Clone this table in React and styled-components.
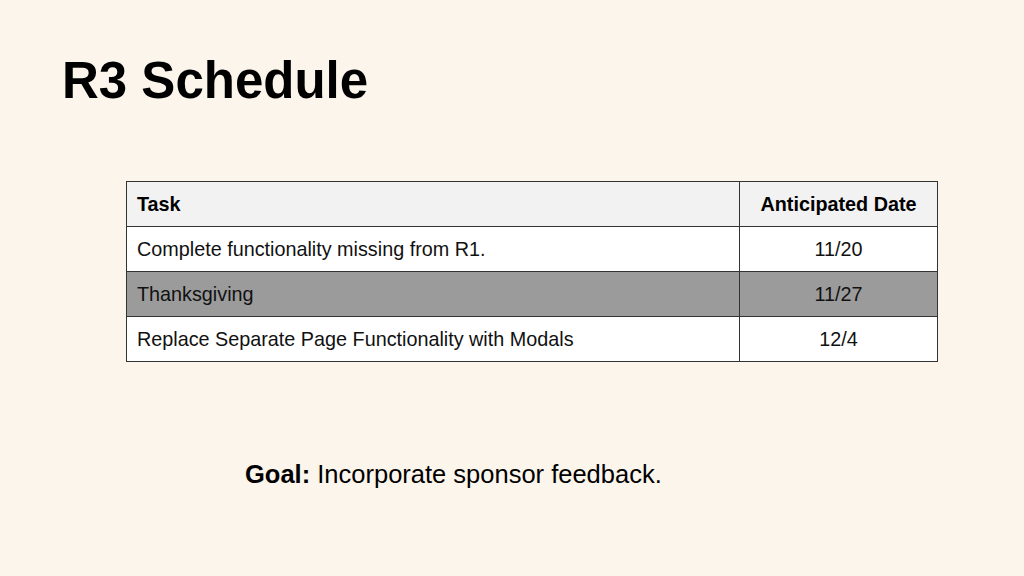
import React from "react";
import styled, { createGlobalStyle } from "styled-components";

const GlobalStyle = createGlobalStyle`
  html, body {
    margin: 0;
    padding: 0;
    background: #fcf5ec;
  }
  body {
    font-family: "Liberation Sans", Arial, Helvetica, sans-serif;
    color: #000;
  }
`;

const rows = [
  { task: "Complete functionality missing from R1.", date: "11/20" },
  { task: "Thanksgiving", date: "11/27", muted: true },
  { task: "Replace Separate Page Functionality with Modals", date: "12/4" },
];

const App = () => {
  return (
    <>
      <GlobalStyle />
      <Slide>
        <Title>R3 Schedule</Title>
        <Table>
          <thead>
            <tr>
              <HeadCell>Task</HeadCell>
              <HeadCell center>Anticipated Date</HeadCell>
            </tr>
          </thead>
          <tbody>
            {rows.map((row, index) => (
              <Row key={index} muted={row.muted}>
                <Cell>{row.task}</Cell>
                <Cell center>{row.date}</Cell>
              </Row>
            ))}
          </tbody>
        </Table>
        <Goal>
          <strong>Goal:</strong> Incorporate sponsor feedback.
        </Goal>
      </Slide>
    </>
  );
};

const Slide = styled.div`
  width: 1024px;
  height: 576px;
  box-sizing: border-box;
  padding: 55px 0 0 62px;
  display: flex;
  flex-direction: column;
  overflow: hidden;
`;

const Title = styled.h1`
  margin: 0;
  font-size: 51px;
  line-height: 51px;
  font-weight: 700;
`;

const Table = styled.table`
  margin: 75px 0 0 64px;
  width: 812px;
  border-collapse: collapse;
  font-size: 19.8px;
  background: #fff;
  border: 1px solid #333;
`;

const HeadCell = styled.th`
  height: 45px;
  padding: 0 10px;
  box-sizing: border-box;
  background: #f2f2f2;
  border: 1px solid #333;
  text-align: ${(p) => (p.center ? "center" : "left")};
  font-weight: 700;
  &:last-child {
    width: 198px;
  }
`;

const Row = styled.tr`
  background: ${(p) => (p.muted ? "#9b9b9b" : "#fff")};
`;

const Cell = styled.td`
  height: 45px;
  padding: 0 10px;
  box-sizing: border-box;
  border: 1px solid #333;
  text-align: ${(p) => (p.center ? "center" : "left")};
  color: #111;
`;

const Goal = styled.p`
  margin: 97px 0 0 183px;
  font-size: 25.5px;
  line-height: 30px;
  strong {
    font-weight: 700;
  }
`;

export default App;
